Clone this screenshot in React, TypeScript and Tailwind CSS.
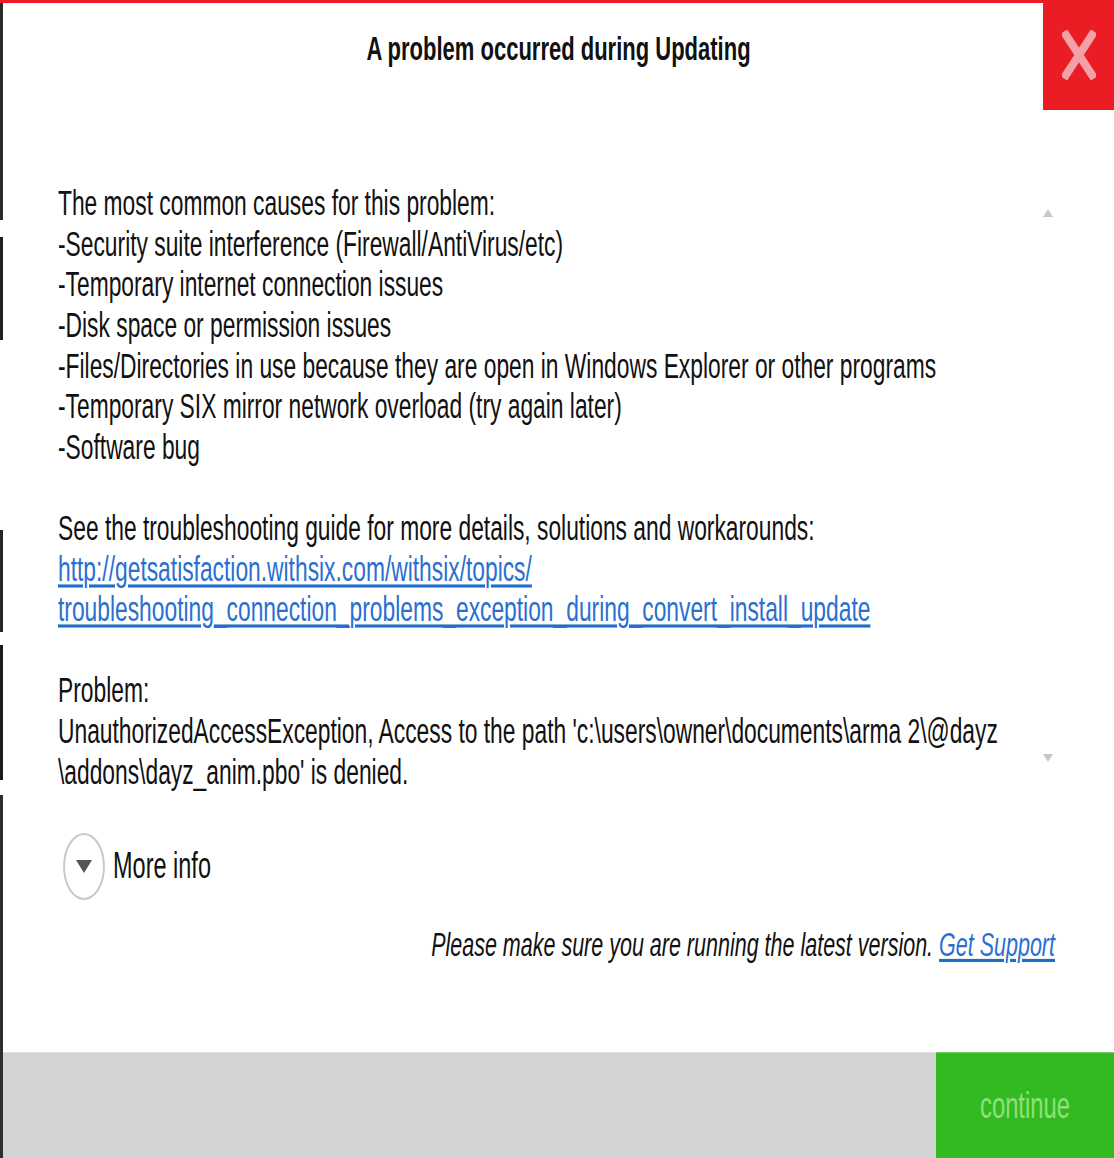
import React from "react";

const T = "inline-block origin-center scale-y-[1.55] whitespace-nowrap";

function Line({ children, className = "" }: { children: React.ReactNode; className?: string }) {
  return (
    <div className="h-[40.6px] flex items-center">
      <span className={`${T} ${className}`}>{children}</span>
    </div>
  );
}

function Blank() {
  return <div className="h-[40.6px]" />;
}

export default function App() {
  return (
    <div
      className="relative w-[1114px] h-[1158px] bg-white flex flex-col overflow-hidden text-[#111] text-[22.8px]"
      style={{ fontFamily: '"Liberation Sans Narrow", "Liberation Sans", Arial, sans-serif' }}
    >
      <div className="h-[3px] shrink-0 bg-[#ec1c24]" />
      <div className="flex flex-1 min-h-0">
        <div className="w-[3px] shrink-0 flex flex-col">
          <div className="h-[217px] bg-[#2a2a2a]" />
          <div className="h-[17px] bg-white" />
          <div className="h-[103px] bg-[#1f1f1f]" />
          <div className="h-[190px] bg-white" />
          <div className="h-[102px] bg-[#262626]" />
          <div className="h-[13px] bg-white" />
          <div className="h-[135px] bg-[#1c1c1c]" />
          <div className="h-[15px] bg-white" />
          <div className="flex-1 bg-[#2e2e2e]" />
        </div>
        <div className="flex-1 min-w-0 flex flex-col">
          <header className="h-[90px] shrink-0 flex items-center justify-center">
            <span className={`${T} font-semibold text-[22px]`}>A problem occurred during Updating</span>
          </header>
          <div className="flex pt-[90px]">
            <div className="flex-1 min-w-0 pl-[55px]">
              <Line>The most common causes for this problem:</Line>
              <Line>-Security suite interference (Firewall/AntiVirus/etc)</Line>
              <Line>-Temporary internet connection issues</Line>
              <Line>-Disk space or permission issues</Line>
              <Line>-Files/Directories in use because they are open in Windows Explorer or other programs</Line>
              <Line>-Temporary SIX mirror network overload (try again later)</Line>
              <Line>-Software bug</Line>
              <Blank />
              <Line>See the troubleshooting guide for more details, solutions and workarounds:</Line>
              <Line className="text-[#2a6fd0] underline decoration-[#1f6cc9] decoration-2 underline-offset-2">
                http://getsatisfaction.withsix.com/withsix/topics/
              </Line>
              <Line className="text-[#2a6fd0] underline decoration-[#1f6cc9] decoration-2 underline-offset-2">
                troubleshooting_connection_problems_exception_during_convert_install_update
              </Line>
              <Blank />
              <Line>Problem:</Line>
              <Line>UnauthorizedAccessException, Access to the path 'c:\users\owner\documents\arma 2\@dayz</Line>
              <Line>\addons\dayz_anim.pbo' is denied.</Line>
            </div>
            <div className="w-[20px] mr-[56px] flex flex-col items-center justify-between pt-[26px] pb-[30px]">
              <div className="w-0 h-0 border-l-[5px] border-r-[5px] border-b-[8px] border-l-transparent border-r-transparent border-b-[#c8c8c8]" />
              <div className="w-0 h-0 border-l-[5px] border-r-[5px] border-t-[8px] border-l-transparent border-r-transparent border-t-[#c8c8c8]" />
            </div>
          </div>
          <div className="mt-[41px] pl-[60px] flex items-center gap-[8px] h-[67px]">
            <div className="w-[42px] h-[67px] rounded-[50%] border-2 border-[#c9c9c9] flex items-center justify-center">
              <div className="w-0 h-0 border-l-[8px] border-r-[8px] border-t-[13px] border-l-transparent border-r-transparent border-t-[#555]" />
            </div>
            <span className={`${T} text-[23.5px]`}>More info</span>
          </div>
          <div className="mt-[25px] h-[41px] flex items-center justify-end pr-[59px] text-[21.5px] italic">
            <span className={T}>
              Please make sure you are running the latest version.{" "}
              <span className="text-[#2a6fd0] underline decoration-[#1f6cc9] decoration-2 underline-offset-2">Get Support</span>
            </span>
          </div>
          <div className="flex-1" />
          <footer className="h-[106px] shrink-0 flex">
            <div className="flex-1 bg-[#d3d3d3] border-t border-[#e2e2e2]" />
            <div className="w-[178px] bg-[#33ba21] border-t border-[#6fd05e] flex items-center justify-center">
              <span className={`${T} text-[23.8px] text-[#8fe07c]`}>continue</span>
            </div>
          </footer>
        </div>
      </div>
      <button className="absolute top-0 right-0 w-[71px] h-[110px] bg-[#ec1c24] flex items-center justify-center">
        <svg width="34" height="50" viewBox="0 0 34 50">
          <path d="M4 5 L30 45 M30 5 L4 45" stroke="#f3a0a8" strokeWidth="8" strokeLinecap="square" />
        </svg>
      </button>
    </div>
  );
}
